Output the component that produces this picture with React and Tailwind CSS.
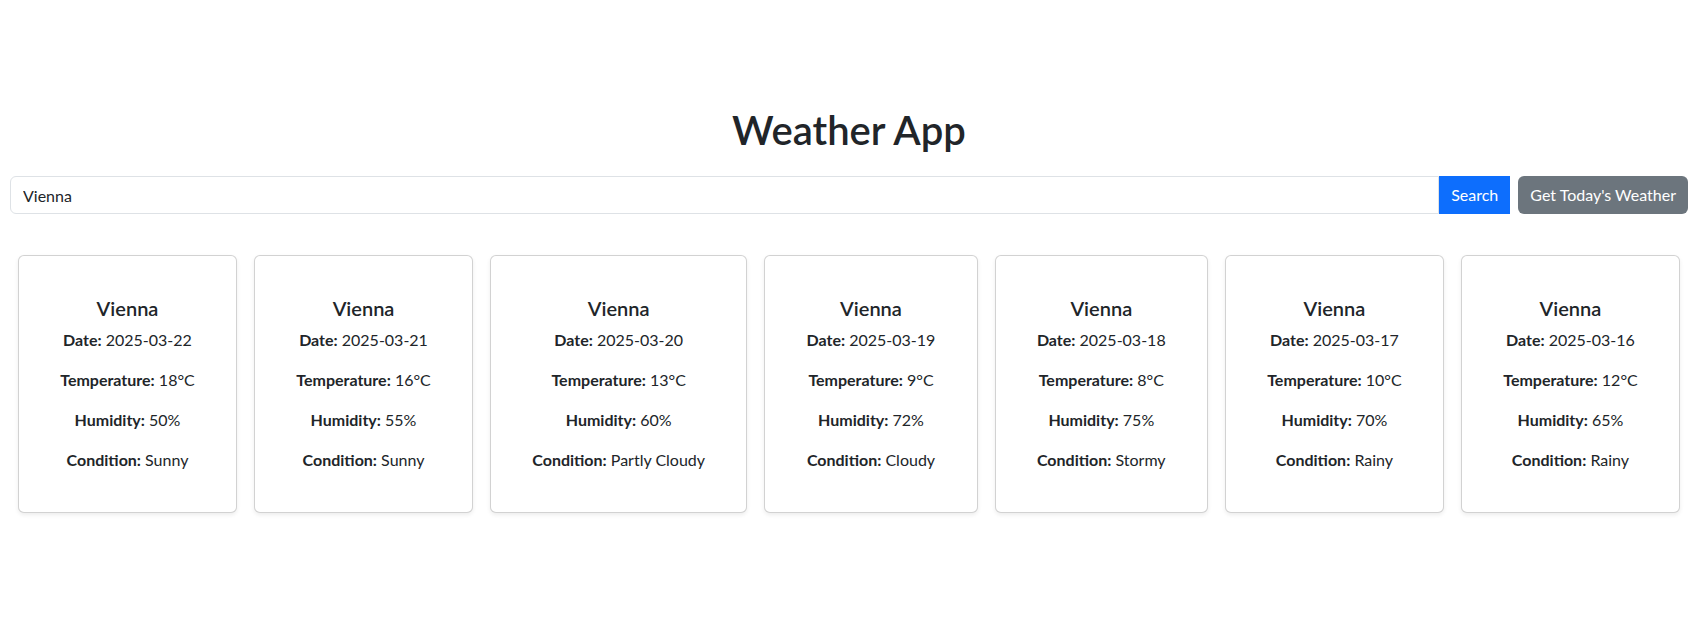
import React, { useState } from 'react';

const forecast = [
  { date: '2025-03-22', temp: 18, humidity: 50, condition: 'Sunny' },
  { date: '2025-03-21', temp: 16, humidity: 55, condition: 'Sunny' },
  { date: '2025-03-20', temp: 13, humidity: 60, condition: 'Partly Cloudy' },
  { date: '2025-03-19', temp: 9, humidity: 72, condition: 'Cloudy' },
  { date: '2025-03-18', temp: 8, humidity: 75, condition: 'Stormy' },
  { date: '2025-03-17', temp: 10, humidity: 70, condition: 'Rainy' },
  { date: '2025-03-16', temp: 12, humidity: 65, condition: 'Rainy' },
];

function WeatherCard({ city, day }) {
  return (
    <div className="flex-auto rounded-[6px] border border-black/[0.175] bg-white px-9 py-10 text-center whitespace-nowrap shadow-[0_2px_4px_rgba(0,0,0,0.075)]">
      <h5 className="mb-2 text-[20px] font-semibold leading-[1.2]">{city}</h5>
      <div className="space-y-4 text-base leading-6">
        <p><b className="font-bold">Date:</b> {day.date}</p>
        <p><b className="font-bold">Temperature:</b> {day.temp}°C</p>
        <p><b className="font-bold">Humidity:</b> {day.humidity}%</p>
        <p><b className="font-bold">Condition:</b> {day.condition}</p>
      </div>
    </div>
  );
}

export default function App() {
  const [city, setCity] = useState('Vienna');

  return (
    <div className="min-h-screen bg-white font-['Segoe_UI',Lato,'Liberation_Sans',sans-serif] text-[#212529]">
      <div className="pl-[10px] pr-[3px] pt-[106px]">
        <h1 className="mb-[22px] text-center text-[40px] font-semibold leading-[1.2]">Weather App</h1>

        <div className="flex gap-2">
          <div className="flex flex-1">
            <input
              type="text"
              value={city}
              onChange={(e) => setCity(e.target.value)}
              className="h-[38px] flex-1 rounded-l-[6px] border border-[#dee2e6] px-3 text-base text-[#212529] outline-none"
            />
            <button className="h-[38px] bg-[#0d6efd] px-3 text-base text-white">Search</button>
          </div>
          <button className="h-[38px] rounded-[6px] bg-[#6c757d] px-3 text-base text-white">Get Today's Weather</button>
        </div>

        <div className="mt-[41px] flex gap-[17px] px-2">
          {forecast.map((day) => (
            <WeatherCard key={day.date} city="Vienna" day={day} />
          ))}
        </div>
      </div>
    </div>
  );
}
